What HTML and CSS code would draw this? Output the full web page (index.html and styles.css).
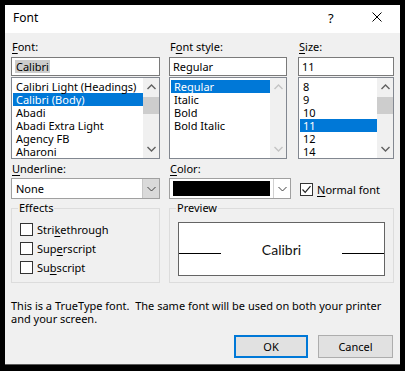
FILE: index.html
```html
<!DOCTYPE html>
<html lang="en">
<head>
    <meta charset="UTF-8">
    <title>Font</title>
    <link rel="stylesheet" href="styles.css">
</head>
<body>
    <div class="dialog">
        <div class="titlebar">
            <span class="title">Font</span>
            <span class="help">?</span>
            <svg class="close" width="10" height="10" viewBox="0 0 10 10">
                <path d="M0.5 0.5 L9.5 9.5 M9.5 0.5 L0.5 9.5" stroke="#000" stroke-width="1" fill="none" />
            </svg>
        </div>
        <div class="content">
            <!-- font / style / size pickers -->
            <div class="pickers">
                <div class="picker picker-font">
                    <div class="label"><u>F</u>ont:</div>
                    <div class="field"><span class="selected-text">Calibri</span></div>
                    <div class="list">
                        <ul>
                            <li>Calibri Light (Headings)</li>
                            <li class="active">Calibri (Body)</li>
                            <li>Abadi</li>
                            <li>Abadi Extra Light</li>
                            <li>Agency FB</li>
                            <li>Aharoni</li>
                        </ul>
                        <div class="scrollbar">
                            <svg class="arrow" width="9" height="6" viewBox="0 0 9 6"><path d="M0.5 5 L4.5 1 L8.5 5" stroke="#606060" fill="none" stroke-width="1.4" /></svg>
                            <div class="track"><div class="thumb"></div></div>
                            <svg class="arrow" width="9" height="6" viewBox="0 0 9 6"><path d="M0.5 1 L4.5 5 L8.5 1" stroke="#606060" fill="none" stroke-width="1.4" /></svg>
                        </div>
                    </div>
                </div>
                <div class="picker picker-style">
                    <div class="label">F<u>o</u>nt style:</div>
                    <div class="field">Regular</div>
                    <div class="list">
                        <ul>
                            <li class="active">Regular</li>
                            <li>Italic</li>
                            <li>Bold</li>
                            <li>Bold Italic</li>
                        </ul>
                        <div class="scrollbar">
                            <svg class="arrow" width="9" height="6" viewBox="0 0 9 6"><path d="M0.5 5 L4.5 1 L8.5 5" stroke="#c4c4c4" fill="none" stroke-width="1.4" /></svg>
                            <div class="track"></div>
                            <svg class="arrow" width="9" height="6" viewBox="0 0 9 6"><path d="M0.5 1 L4.5 5 L8.5 1" stroke="#c4c4c4" fill="none" stroke-width="1.4" /></svg>
                        </div>
                    </div>
                </div>
                <div class="picker picker-size">
                    <div class="label"><u>S</u>ize:</div>
                    <div class="field">11</div>
                    <div class="list">
                        <ul>
                            <li>8</li>
                            <li>9</li>
                            <li>10</li>
                            <li class="active">11</li>
                            <li>12</li>
                            <li>14</li>
                        </ul>
                        <div class="scrollbar">
                            <svg class="arrow" width="9" height="6" viewBox="0 0 9 6"><path d="M0.5 5 L4.5 1 L8.5 5" stroke="#606060" fill="none" stroke-width="1.4" /></svg>
                            <div class="track"><div class="thumb"></div></div>
                            <svg class="arrow" width="9" height="6" viewBox="0 0 9 6"><path d="M0.5 1 L4.5 5 L8.5 1" stroke="#606060" fill="none" stroke-width="1.4" /></svg>
                        </div>
                    </div>
                </div>
            </div>

            <!-- underline / color / normal font -->
            <div class="options">
                <div class="option option-underline">
                    <div class="label"><u>U</u>nderline:</div>
                    <div class="combo combo-underline">
                        <span class="combo-value">None</span>
                        <span class="combo-button">
                            <svg width="9" height="6" viewBox="0 0 9 6"><path d="M0.5 1 L4.5 5 L8.5 1" stroke="#404040" fill="none" stroke-width="1" /></svg>
                        </span>
                    </div>
                </div>
                <div class="option option-color">
                    <div class="label"><u>C</u>olor:</div>
                    <div class="combo combo-color">
                        <span class="swatch"></span>
                        <span class="combo-button">
                            <svg width="9" height="6" viewBox="0 0 9 6"><path d="M0.5 1 L4.5 5 L8.5 1" stroke="#404040" fill="none" stroke-width="1" /></svg>
                        </span>
                    </div>
                </div>
                <div class="check check-normal">
                    <span class="box">
                        <svg width="11" height="11" viewBox="0 0 11 11"><path d="M1.5 5.5 L4.2 8.3 L9.5 2.2" stroke="#222" fill="none" stroke-width="1.2" /></svg>
                    </span>
                    <span><u>N</u>ormal font</span>
                </div>
            </div>

            <!-- effects and preview groups -->
            <div class="groups">
                <div class="group group-effects">
                    <span class="group-title">Effects</span>
                    <div class="check"><span class="box"></span><span>Stri<u>k</u>ethrough</span></div>
                    <div class="check"><span class="box"></span><span>Sup<u>e</u>rscript</span></div>
                    <div class="check"><span class="box"></span><span>Su<u>b</u>script</span></div>
                </div>
                <div class="group group-preview">
                    <span class="group-title">Preview</span>
                    <div class="preview">
                        <span class="rule"></span>
                        <span class="sample">Calibri</span>
                        <span class="rule"></span>
                    </div>
                </div>
            </div>

            <p class="note">This is a TrueType font.&nbsp; The same font will be used on both your printer and your screen.</p>

            <div class="buttons">
                <button class="btn btn-default">OK</button>
                <button class="btn">Cancel</button>
            </div>
        </div>
    </div>
</body>
</html>
```

FILE: styles.css
```css
html, body {
    margin: 0;
    padding: 0;
    background: #000;
}
body {
    font-family: "Noto Sans", "Open Sans", sans-serif;
    font-size: 11px;
    color: #000;
}
u {
    text-decoration-thickness: 1px;
    text-underline-offset: 2px;
}
.dialog {
    margin: 5px 0 0 5px;
    width: 395px;
    height: 359px;
    background: #f0f0f0;
    border-bottom: 1px solid #5a5a5a;
    overflow: hidden;
}
.titlebar {
    height: 28px;
    background: #fff;
    display: flex;
    align-items: center;
}
.title {
    margin-left: 8px;
    flex: 1;
    font-size: 12px;
    line-height: 16px;
    margin-top: -2px;
}
.help {
    width: 8px;
    margin-right: 36px;
    margin-top: -3px;
    font-size: 13px;
}
.close {
    margin-right: 18px;
    margin-top: -4px;
}
.content {
    padding: 6px 0 0 6px;
}

/* pickers */
.pickers {
    display: flex;
}
.picker-font { width: 149px; }
.picker-style { width: 118px; margin-left: 9px; }
.picker-size { width: 96px; margin-left: 11px; }
.label {
    height: 16px;
    line-height: 16px;
    margin-bottom: 2px;
    margin-left: 1px;
}
.field {
    height: 19px;
    box-sizing: border-box;
    border: 1px solid #7a7a7a;
    background: #fff;
    padding-left: 3px;
    line-height: 17px;
    white-space: nowrap;
}
.selected-text {
    background: #cccccc;
    display: inline-block;
    line-height: 13px;
    padding: 0 1px;
}
.list {
    margin-top: 1px;
    height: 82px;
    box-sizing: border-box;
    border: 1px solid #828790;
    background: #fff;
    display: flex;
}
.list ul {
    flex: 1;
    list-style: none;
    margin: 0;
    padding: 2px 0 0 1px;
    overflow: hidden;
}
.list li {
    height: 13px;
    line-height: 13px;
    padding-left: 3px;
    white-space: nowrap;
}
.list li.active {
    background: #0078d7;
    color: #fff;
}
.scrollbar {
    width: 16px;
    background: #f0f0f0;
    display: flex;
    flex-direction: column;
    align-items: center;
}
.scrollbar .arrow {
    margin: 6px 0;
}
.scrollbar .track {
    flex: 1;
    align-self: stretch;
    padding-top: 1px;
}
.thumb {
    height: 17px;
    background: #cdcdcd;
}

/* underline / color row */
.options {
    display: flex;
    margin-top: 2px;
}
.option-underline { width: 149px; }
.option-color { width: 122px; margin-left: 9px; }
.options .label {
    margin-bottom: 1px;
}
.combo {
    height: 21px;
    box-sizing: border-box;
    border: 1px solid #a0a0a0;
    background: #fff;
    display: flex;
}
.combo-value {
    flex: 1;
    padding-left: 4px;
    line-height: 19px;
}
.combo-button {
    width: 16px;
    display: flex;
    align-items: center;
    justify-content: center;
}
.combo-underline .combo-button {
    background: #dadada;
    border-left: 1px solid #c6c6c6;
}
.swatch {
    flex: 1;
    margin: 2px 3px 2px 3px;
    background: #000;
}
.combo-color .combo-button {
    background: #fff;
    border-left: 1px solid #d0d0d0;
}
.check {
    display: flex;
    align-items: center;
    height: 19px;
}
.box {
    width: 13px;
    height: 13px;
    box-sizing: border-box;
    border: 1px solid #333;
    background: #fff;
    margin-right: 4px;
    display: flex;
    align-items: center;
    justify-content: center;
}
.check-normal {
    margin: 22px 0 0 9px;
    height: 13px;
}

/* groups */
.groups {
    display: flex;
    margin-top: 9px;
}
.group {
    box-sizing: border-box;
    height: 75px;
    border: 1px solid #dcdcdc;
}
.group-title {
    display: inline-block;
    margin: -9px 0 0 6px;
    padding: 0 1px 0 1px;
    line-height: 16px;
    background: #f0f0f0;
    vertical-align: top;
}
.group-effects {
    width: 149px;
}
.group-effects .check {
    margin-left: 8px;
}
.group-effects .check:first-of-type {
    margin-top: -4px;
}
.group-preview {
    width: 225px;
    margin-left: 9px;
}
.preview {
    margin: -2px 0 0 8px;
    width: 207px;
    height: 54px;
    box-sizing: border-box;
    border: 1px solid #646464;
    background: #fff;
    display: flex;
    align-items: flex-end;
    padding-bottom: 21px;
}
.rule {
    width: 42px;
    border-bottom: 1px solid #000;
}
.sample {
    flex: 1;
    text-align: center;
    font-family: Lato, "Noto Sans", sans-serif;
    font-weight: 400;
    font-size: 14px;
    line-height: 14px;
    margin-bottom: -3px;
    color: #111;
}

.note {
    margin: 16px 8px 0 0;
    line-height: 13px;
}

.buttons {
    display: flex;
    justify-content: flex-end;
    gap: 10px;
    margin: 10px 7px 0 0;
}
.btn {
    width: 75px;
    height: 23px;
    box-sizing: border-box;
    border: 1px solid #adadad;
    background: #e1e1e1;
    font-family: inherit;
    font-size: 11px;
    color: #000;
    padding: 0;
}
.btn-default {
    width: 74px;
    border: 2px solid #0078d7;
}
```
